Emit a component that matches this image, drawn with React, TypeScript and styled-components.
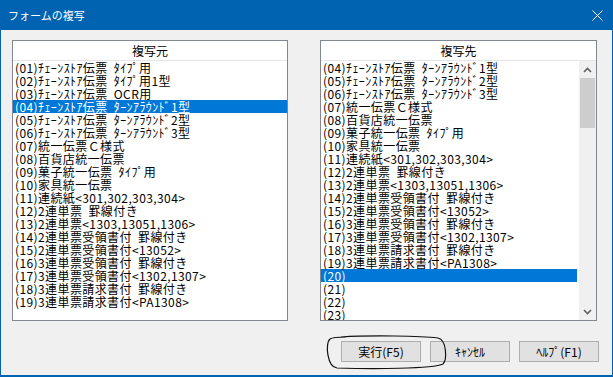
import React from "react";
import styled, { createGlobalStyle } from "styled-components";

const Global = createGlobalStyle`
  html, body { margin: 0; padding: 0; background: #f0f0f0; }
  * { box-sizing: border-box; }
`;

const FONT = `"MS UI Gothic", "Noto Sans CJK JP", sans-serif`;

const Window = styled.div`
  position: relative;
  width: 613px;
  height: 377px;
  background: #f0f0f0;
  border: 1px solid #0063b1;
  border-top: none;
  border-bottom-width: 2px;
  display: flex;
  flex-direction: column;
  font-family: ${FONT};
  overflow: hidden;
`;

const TitleBar = styled.div`
  height: 30px;
  margin: 0 -1px;
  background: #0063b1;
  color: #fff;
  display: flex;
  align-items: center;
  justify-content: space-between;
  padding: 0 10px 0 8px;
  font-size: 11px;
  font-family: "Noto Sans CJK JP", sans-serif;
`;

const Body = styled.div`
  flex: 1;
  display: flex;
  flex-direction: column;
  padding: 10px 15px 0 11px;
`;

const Panels = styled.div`
  display: grid;
  grid-template-columns: 276px 277px;
  column-gap: 32px;
`;

const Panel = styled.div`
  height: 281px;
  border: 1px solid #828790;
  background: #fff;
  display: flex;
  flex-direction: column;
  overflow: hidden;
`;

const Header = styled.div`
  height: 20px;
  flex: none;
  border-bottom: 1px solid #e5e5e5;
  display: flex;
  align-items: center;
  justify-content: center;
  font-size: 12px;
  color: #000;
  font-family: "Noto Sans CJK JP", sans-serif;
`;

const ListArea = styled.div`
  flex: 1;
  display: flex;
  min-height: 0;
`;

const List = styled.div`
  flex: 1;
  min-width: 0;
  overflow: hidden;
`;

const Row = styled.div<{ $sel?: boolean }>`
  height: 13px;
  line-height: 13px;
  padding-left: 2px;
  font-size: 12px;
  letter-spacing: 0.4px;
  white-space: pre;
  color: ${(p) => (p.$sel ? "#fff" : "#000")};
  background: ${(p) => (p.$sel ? "#0078d7" : "transparent")};
`;

const ScrollBar = styled.div`
  width: 17px;
  flex: none;
  margin-left: 2px;
  background: #f0f0f0;
  display: flex;
  flex-direction: column;
`;

const ScrollArrow = styled.div`
  height: 17px;
  display: flex;
  align-items: center;
  justify-content: center;
  flex: none;
`;

const Track = styled.div`
  flex: 1;
  padding: 0 1px;
`;

const Thumb = styled.div`
  height: 50px;
  background: #cdcdcd;
`;

const Buttons = styled.div`
  display: flex;
  justify-content: flex-end;
  gap: 9px;
  margin-top: 20px;
  margin-right: -2px;
`;

const Button = styled.div`
  width: 80px;
  height: 21px;
  border: 1px solid #adadad;
  background: #e1e1e1;
  display: flex;
  align-items: center;
  justify-content: center;
  font-size: 12px;
  font-family: "Noto Sans CJK JP", sans-serif;
  color: #000;
`;

const Annotation = styled.svg`
  position: absolute;
  left: 0;
  top: 0;
  pointer-events: none;
`;

const leftItems = [
  "(01)ﾁｪｰﾝｽﾄｱ伝票  ﾀｲﾌﾟ用",
  "(02)ﾁｪｰﾝｽﾄｱ伝票  ﾀｲﾌﾟ用1型",
  "(03)ﾁｪｰﾝｽﾄｱ伝票  OCR用",
  "(04)ﾁｪｰﾝｽﾄｱ伝票  ﾀｰﾝｱﾗｳﾝﾄﾞ1型",
  "(05)ﾁｪｰﾝｽﾄｱ伝票  ﾀｰﾝｱﾗｳﾝﾄﾞ2型",
  "(06)ﾁｪｰﾝｽﾄｱ伝票  ﾀｰﾝｱﾗｳﾝﾄﾞ3型",
  "(07)統一伝票Ｃ様式",
  "(08)百貨店統一伝票",
  "(09)菓子統一伝票  ﾀｲﾌﾟ用",
  "(10)家具統一伝票",
  "(11)連続紙<301,302,303,304>",
  "(12)2連単票  罫線付き",
  "(13)2連単票<1303,13051,1306>",
  "(14)2連単票受領書付  罫線付き",
  "(15)2連単票受領書付<13052>",
  "(16)3連単票受領書付  罫線付き",
  "(17)3連単票受領書付<1302,1307>",
  "(18)3連単票請求書付  罫線付き",
  "(19)3連単票請求書付<PA1308>",
];

const rightItems = [...leftItems.slice(3), "(20)", "(21)", "(22)", "(23)"];

const Chevron = ({ up }: { up?: boolean }) => (
  <svg width="9" height="6" viewBox="0 0 9 6">
    <path
      d={up ? "M1 5 L4.5 1.5 L8 5" : "M1 1 L4.5 4.5 L8 1"}
      fill="none"
      stroke="#606060"
      strokeWidth="1.6"
    />
  </svg>
);

export default function App() {
  return (
    <>
      <Global />
      <Window>
        <TitleBar>
          <span>フォームの複写</span>
          <svg width="11" height="11" viewBox="0 0 11 11">
            <path d="M0.5 0.5 L10.5 10.5 M10.5 0.5 L0.5 10.5" stroke="#fff" strokeWidth="1" />
          </svg>
        </TitleBar>
        <Body>
          <Panels>
            <Panel>
              <Header>複写元</Header>
              <ListArea>
                <List>
                  {leftItems.map((t, i) => (
                    <Row key={t} $sel={i === 3}>
                      {t}
                    </Row>
                  ))}
                </List>
              </ListArea>
            </Panel>
            <Panel>
              <Header>複写先</Header>
              <ListArea>
                <List>
                  {rightItems.map((t) => (
                    <Row key={t} $sel={t === "(20)"}>
                      {t}
                    </Row>
                  ))}
                </List>
                <ScrollBar>
                  <ScrollArrow>
                    <Chevron up />
                  </ScrollArrow>
                  <Track>
                    <Thumb />
                  </Track>
                  <ScrollArrow>
                    <Chevron />
                  </ScrollArrow>
                </ScrollBar>
              </ListArea>
            </Panel>
          </Panels>
          <Buttons>
            <Button>実行(F5)</Button>
            <Button>ｷｬﾝｾﾙ</Button>
            <Button>ﾍﾙﾌﾟ(F1)</Button>
          </Buttons>
        </Body>
        <Annotation width="613" height="377" viewBox="0 0 613 377">
          <path
            d="M340 337 C370 335 420 336 437 338 C446 340 446 360 442 364 C432 369 370 369 336 368 C326 367 324 343 329 339 C332 337 336 337 345 337"
            fill="none"
            stroke="#111"
            strokeWidth="1.2"
          />
        </Annotation>
      </Window>
    </>
  );
}
